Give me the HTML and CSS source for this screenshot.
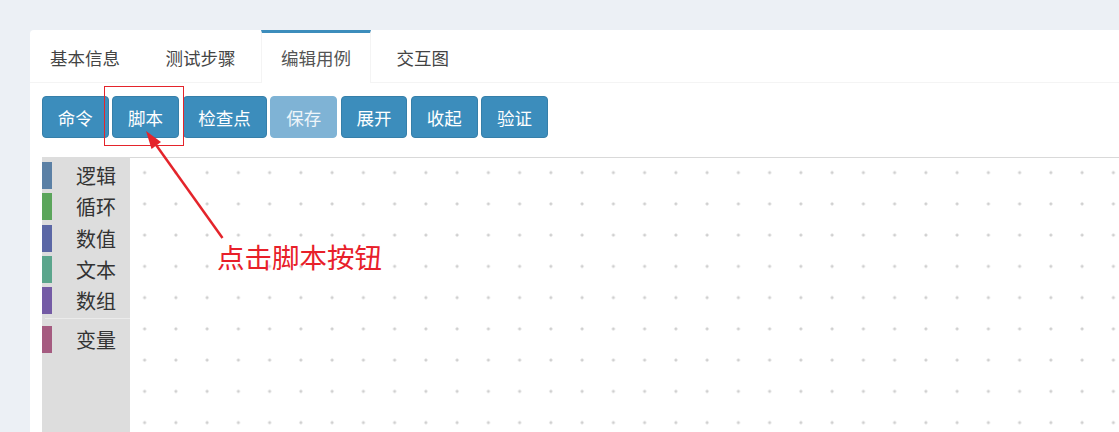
FILE: index.html
```html
<html>
<head>
<title>编辑用例</title>
<link rel="stylesheet" href="styles.css">
</head>
<body>
<div class="wrapper">
  <div class="panel">
    <ul class="tabs">
      <li class="tab">基本信息</li>
      <li class="tab">测试步骤</li>
      <li class="tab active">编辑用例</li>
      <li class="tab">交互图</li>
    </ul>
    <div class="tab-content">
      <div class="toolbar">
        <button class="btn">命令</button>
        <button class="btn">脚本</button>
        <button class="btn">检查点</button>
        <button class="btn disabled">保存</button>
        <button class="btn">展开</button>
        <button class="btn">收起</button>
        <button class="btn">验证</button>
      </div>
    </div>
    <div class="blockly">
      <div class="toolbox">
        <div class="cat"><span class="strip logic"></span><span class="label">逻辑</span></div>
        <div class="cat"><span class="strip loop"></span><span class="label">循环</span></div>
        <div class="cat"><span class="strip math"></span><span class="label">数值</span></div>
        <div class="cat"><span class="strip text"></span><span class="label">文本</span></div>
        <div class="cat"><span class="strip list"></span><span class="label">数组</span></div>
        <div class="sep"></div>
        <div class="cat"><span class="strip vars"></span><span class="label">变量</span></div>
      </div>
      <div class="workspace"></div>
    </div>
  </div>
</div>

<!-- annotation drawn over the screenshot -->
<svg class="marks" width="1119" height="432" viewBox="0 0 1119 432">
  <rect x="104.5" y="86.5" width="79" height="59" fill="none" stroke="#e4242b" stroke-width="1"/>
  <line x1="222.5" y1="238" x2="155" y2="143.5" stroke="#e4242b" stroke-width="2.5"/>
  <polygon points="146,131 161,142 151.5,149" fill="#e4242b"/>
</svg>
<div class="note">点击脚本按钮</div>
</body>
</html>
```
FILE: styles.css
```css
body {
  margin: 0;
  background-color: #ecf0f5;
  font-family: "Noto Sans CJK SC", "Noto Sans", sans-serif;
  overflow: hidden;
  height: 432px;
}

.wrapper {
  padding: 30px 0 0 30px;
}

.panel {
  background-color: #ffffff;
  border-radius: 4px 0 0 0;
  height: 420px;
}

/* tabs */
.tabs {
  list-style: none;
  margin: 0;
  padding: 0;
  display: flex;
  border-bottom: 1px solid #f4f4f4;
}

.tab {
  height: 49px;
  line-height: 49px;
  padding: 0 20px;
  margin-right: 5.5px;
  border-top: 3px solid transparent;
  font-size: 17.5px;
  color: #444444;
}

.tab.active {
  border-top-color: #3c8dbc;
  border-left: 1px solid #f4f4f4;
  border-right: 1px solid #f4f4f4;
  padding: 0 19px;
  margin-bottom: -1px;
  height: 50px;
  background-color: #ffffff;
  color: #555555;
}

.tab-content {
  padding: 13px 12px 19px 12px;
}

.toolbar {
  display: flex;
  gap: 3.7px;
}

.btn {
  font-family: "Noto Sans CJK SC", "Noto Sans", sans-serif;
  font-size: 17.5px;
  line-height: 25px;
  padding: 7.5px 14.8px;
  color: #ffffff;
  background-color: #3c8dbc;
  border: 1px solid #367fa9;
  border-radius: 4px;
  white-space: nowrap;
}

.btn.disabled {
  background-color: #7fb3d5;
  border-color: #7fb3d5;
  color: #eef5fa;
}

/* blockly area */
.blockly {
  display: flex;
  margin-left: 12px;
  height: 280px;
}

.toolbox {
  width: 88px;
  background-color: #dddddd;
  padding-top: 5px;
}

.cat {
  display: flex;
  align-items: center;
  height: 27px;
  margin-bottom: 4.25px;
}

.strip {
  width: 10px;
  height: 27px;
}

.label {
  margin-left: 24px;
  font-size: 20px;
  line-height: 27px;
  color: #333333;
}

.logic { background-color: #5b80a5; }
.loop { background-color: #5ba55b; }
.math { background-color: #5b67a5; }
.text { background-color: #5ba58c; }
.list { background-color: #745ba5; }
.vars { background-color: #a55b80; }

.sep {
  margin: 2.5px 0 6.5px 3px;
  border-bottom: 1px solid #ebebeb;
}

.workspace {
  flex: 1;
  border-top: 1px solid #d9d9d9;
  background-color: #ffffff;
  background-image: radial-gradient(circle, #cfcfcf 1.2px, transparent 1.8px);
  background-size: 31.25px 31.25px;
  background-position: -1px -1px;
}

/* annotation */
.marks {
  position: absolute;
  left: 0;
  top: 0;
  pointer-events: none;
}

.note {
  position: absolute;
  left: 217px;
  top: 244px;
  font-family: "Liberation Serif", "Noto Sans CJK SC", serif;
  font-size: 27.5px;
  line-height: 30px;
  color: #e8202a;
}
```
